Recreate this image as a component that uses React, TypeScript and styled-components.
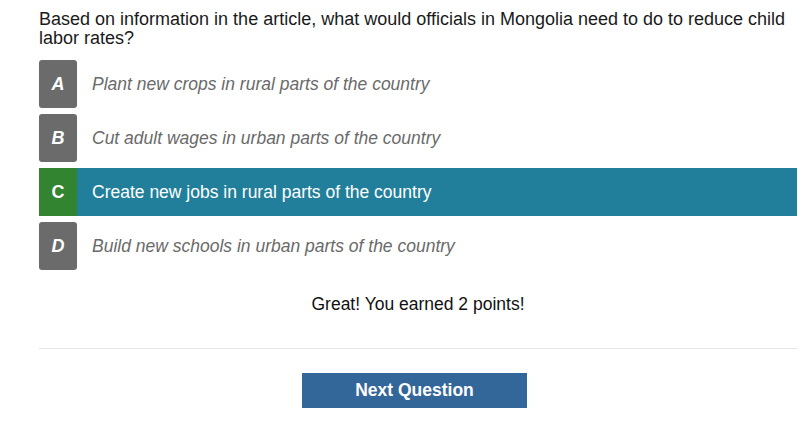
import React from "react";
import styled, { createGlobalStyle } from "styled-components";

const Global = createGlobalStyle`
  html, body { margin: 0; padding: 0; background: #ffffff; }
  body { font-family: "Liberation Sans", Arial, sans-serif; }
`;

const Page = styled.div`
  padding: 10px 11px 0 39px;
  width: 758px;
`;

const Question = styled.p`
  margin: 0;
  font-size: 18px;
  line-height: 19px;
  color: #1a1a1a;
`;

const Options = styled.div`
  margin-top: 12px;
  display: flex;
  flex-direction: column;
  gap: 6px;
`;

const Row = styled.div<{ $selected?: boolean }>`
  display: flex;
  align-items: center;
  height: 48px;
  background: ${(p) => (p.$selected ? "#227f9b" : "transparent")};
`;

const Letter = styled.div<{ $correct?: boolean }>`
  width: 38px;
  height: 48px;
  flex: 0 0 38px;
  display: flex;
  align-items: center;
  justify-content: center;
  border-radius: ${(p) => (p.$correct ? "0" : "3px")};
  background: ${(p) => (p.$correct ? "#338430" : "#6b6b6b")};
  color: #ffffff;
  font-weight: bold;
  font-style: ${(p) => (p.$correct ? "normal" : "italic")};
  font-size: 18px;
`;

const OptionText = styled.span<{ $selected?: boolean }>`
  margin-left: 15px;
  font-size: 17.5px;
  font-style: ${(p) => (p.$selected ? "normal" : "italic")};
  color: ${(p) => (p.$selected ? "#ffffff" : "#6a6a6a")};
`;

const Feedback = styled.div`
  margin-top: 24px;
  text-align: center;
  font-size: 17.5px;
  line-height: 20px;
  color: #111;
`;

const Divider = styled.hr`
  margin: 34px 0 0 0;
  border: 0;
  border-top: 1px solid #e6e6e6;
`;

const ButtonBar = styled.div`
  display: flex;
  justify-content: center;
  padding-right: 7px;
  margin-top: 24px;
`;

const NextButton = styled.button`
  width: 225px;
  height: 35px;
  border: 0;
  border-radius: 0;
  background: #336699;
  color: #ffffff;
  font-family: "Liberation Sans", Arial, sans-serif;
  font-weight: bold;
  font-size: 17.5px;
  cursor: pointer;
`;

const options = [
  { letter: "A", text: "Plant new crops in rural parts of the country" },
  { letter: "B", text: "Cut adult wages in urban parts of the country" },
  { letter: "C", text: "Create new jobs in rural parts of the country", selected: true },
  { letter: "D", text: "Build new schools in urban parts of the country" },
];

export default function App() {
  return (
    <>
      <Global />
      <Page>
        <Question>
          Based on information in the article, what would officials in Mongolia need to do to reduce child
          labor rates?
        </Question>
        <Options>
          {options.map((o) => (
            <Row key={o.letter} $selected={o.selected}>
              <Letter $correct={o.selected}>{o.letter}</Letter>
              <OptionText $selected={o.selected}>{o.text}</OptionText>
            </Row>
          ))}
        </Options>
        <Feedback>Great! You earned 2 points!</Feedback>
        <Divider />
        <ButtonBar>
          <NextButton>Next Question</NextButton>
        </ButtonBar>
      </Page>
    </>
  );
}
